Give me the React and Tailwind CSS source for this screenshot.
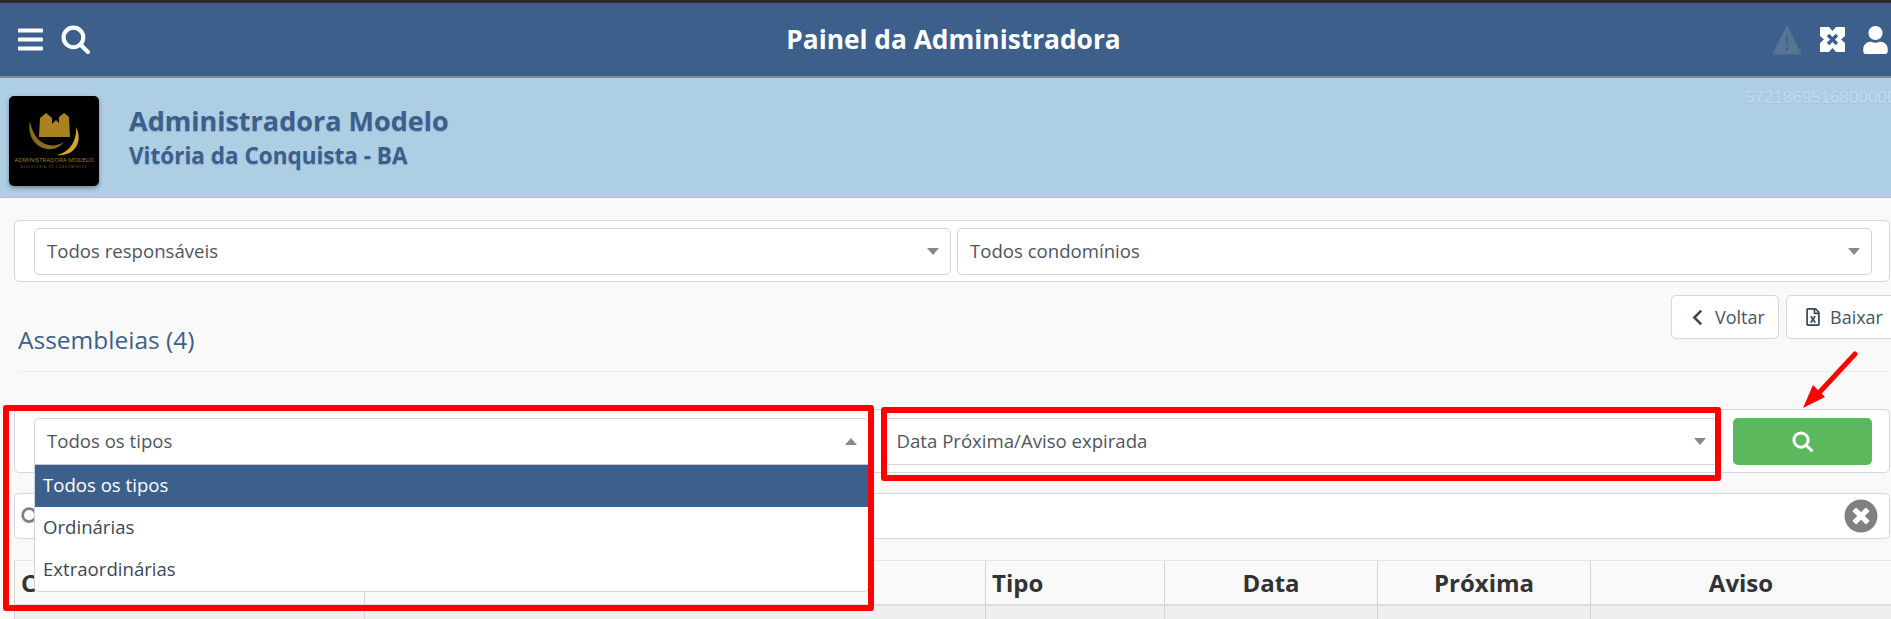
import { FaBars, FaUser, FaTimesCircle, FaRegFileExcel } from 'react-icons/fa';

const SearchGlyph = ({ className }) => (
	<svg viewBox="0 0 28 28" className={className} fill="none" stroke="currentColor" strokeWidth="4" strokeLinecap="round">
		<circle cx="12" cy="12" r="9.5" />
		<path d="M19 19l7 7" />
	</svg>
);

const Caret = ({ up }) => (
	<div className={`w-0 h-0 border-l-[6px] border-r-[6px] border-l-transparent border-r-transparent ${up ? 'border-b-[7px] border-b-[#888888]' : 'border-t-[7px] border-t-[#888888]'}`} />
);

const Select = ({ label, up, className }) => (
	<div className={`h-[47px] bg-white border border-[#ced4de] rounded-[5px] flex items-center justify-between pl-[12px] pr-[11px] text-[18.6px] text-[#4f5560] ${className}`}>
		<span>{label}</span>
		<Caret up={up} />
	</div>
);

const Logo = () => (
	<div className="w-[90px] h-[90px] bg-black rounded-[5px] shadow-[0_2px_4px_rgba(0,0,0,0.35)] shrink-0">
		<svg viewBox="0 0 90 90" className="w-full h-full">
			<path d="M30 41L31 22l6-5 6 5v6l4-4 3 3V21l5-4 5 4 1 20z" fill="#a98222" />
			<path d="M21 25c-3 13 4 26 17 28 8 1 13-2 17-7-5 3-10 4-15 3-11-2-17-12-19-24z" fill="#8a6a1c" />
			<path d="M67 31c1 12-5 25-19 28 16 2 27-12 19-28z" fill="#d2a52c" />
			<text x="45" y="66" textAnchor="middle" fontSize="6" fill="#a98222" fontFamily="Open Sans, sans-serif">ADMINISTRADORA MODELO</text>
			<text x="45" y="72" textAnchor="middle" fontSize="3" fill="#8a6a1c" letterSpacing="0.9" fontFamily="Open Sans, sans-serif">ASSESSORIA DE CONDOMÍNIOS</text>
		</svg>
	</div>
);

const cols = [
	{ name: 'Condomínio', w: 'w-[350px]', cls: 'pl-[6px]', rowCls: 'pl-[58px]', row: 'Residencial das Flores' },
	{ name: 'Assembleia', w: 'w-[621px]', cls: 'pl-[8px]', rowCls: 'pl-[160px]', row: 'Assembleia Ordinária' },
	{ name: 'Tipo', w: 'w-[179px]', cls: 'pl-[6px]', rowCls: 'pl-[40px]', row: 'Ordinária' },
	{ name: 'Data', w: 'w-[213px]', cls: 'text-center', rowCls: '', row: '' },
	{ name: 'Próxima', w: 'w-[213px]', cls: 'text-center', rowCls: '', row: '' },
	{ name: 'Aviso', w: 'flex-1', cls: 'text-center', rowCls: 'text-center', row: 'Aguardando confirmação' },
];

export default function App() {
	return (
		<div className="relative h-[619px] overflow-hidden bg-[#f9f9f9] font-['Open_Sans',sans-serif]">
			{/* navbar */}
			<div className="h-[76px] border-t-[3px] border-[#2b2b2b] bg-[#3c5f8b] shadow-[0_2px_0_#7d8a99] relative z-10 flex items-center justify-between pl-[18px] pr-[3px] text-white">
				<div className="flex items-center gap-[18px]">
					<FaBars className="w-[25px] h-[29px]" />
					<SearchGlyph className="w-[29px] h-[29px]" />
				</div>
				<h1 className="text-[26.3px] font-bold pl-[45px]">Painel da Administradora</h1>
				<div className="flex items-center gap-[18px]">
					<svg viewBox="0 0 30 30" className="w-[30px] h-[30px]">
						<path d="M15 1L29 29H1z" fill="#567494" stroke="#567494" strokeLinejoin="round" />
						<path d="M14 11h2l-.4 9h-1.2zM13.600 22.500h2.800v2.800h-2.800z" fill="#3c5f8b" />
					</svg>
					<svg viewBox="0 0 25 25" className="w-[25px] h-[25px]">
						<rect width="25" height="25" rx="1" fill="#fff" />
						<path d="M9 0h7l-3.500 4zM9 25h7l-3.500-4zM0 9v7l4-3.500zM25 9v7l-4-3.500z" fill="#3c5f8b" />
						<path d="M8 8l9 9M17 8l-9 9" stroke="#3c5f8b" strokeWidth="3.500" />
					</svg>
					<FaUser className="w-[25px] h-[28px]" />
				</div>
			</div>

			{/* banner */}
			<div className="relative h-[122px] bg-[#aecee4] border-b border-[#9cc6e6] flex items-start pl-[9px] pt-[20px]">
				<Logo />
				<div className="ml-[30px] pt-[7px] text-[#3c5f8b] font-bold [text-shadow:0_1px_1px_rgba(60,95,139,0.3)]">
					<div className="text-[27px] leading-[36px]">Administradora Modelo</div>
					<div className="text-[22.5px] leading-[33px]">Vitória da Conquista - BA</div>
				</div>
				<span className="absolute left-[1745px] top-[12px] font-['Liberation_Sans',sans-serif] text-[17px] leading-[20px] text-[#c2dbec] [text-shadow:0_1px_1px_#9dc2dc] whitespace-nowrap">5721869516800000</span>
			</div>

			{/* filtros */}
			<div className="ml-[14px] mr-px mt-[22px] h-[62px] bg-white border border-[#d3d8e0] rounded-[5px] flex items-center gap-[6px] pl-[19px] pr-[17px]">
				<Select label="Todos responsáveis" className="w-[917px]" />
				<Select label="Todos condomínios" className="flex-1" />
			</div>

			<div className="ml-[18px] mr-[3px] h-[90px] border-b border-[#eeeeee] flex items-start justify-between">
				<h2 className="pt-[40px] text-[24.5px] leading-[36px] text-[#3c5f8b]">Assembleias (4)</h2>
				<div className="flex gap-[7px] mt-[13px] -mr-[12px] text-[18px] text-[#4a5462]">
					<button className="w-[108px] h-[44px] bg-white border border-[#d3d8e0] rounded-[5px] flex items-center pl-[20px] gap-[12px]">
						<svg viewBox="0 0 10 16" className="w-[11px] h-[17px] text-[#39465a]" fill="none" stroke="currentColor" strokeWidth="2.400">
							<path d="M8.500 1.500L2 8l6.500 6.500" />
						</svg>
						Voltar
					</button>
					<button className="w-[114px] h-[44px] bg-white border border-[#d3d8e0] rounded-[5px] flex items-center pl-[19px] gap-[10px]">
						<FaRegFileExcel className="w-[14px] h-[18px] text-[#39465a]" />
						Baixar
					</button>
				</div>
			</div>

			{/* tipo + situacao */}
			<div className="ml-[14px] mr-px mt-[37px] h-[64px] bg-white border border-[#d3d8e0] rounded-[5px] flex items-center gap-[15px] pl-[19px] pr-[17px]">
				<div className="relative w-[835px]">
					<Select label="Todos os tipos" up className="w-full rounded-b-none" />
					<div className="absolute z-20 left-0 right-0 top-[46px] bg-white border border-[#ced4de] border-t-[#c4c9d1] rounded-b-[5px] text-[18.6px] text-[#3d4654]">
						<div className="h-[42px] flex items-center pl-[8px] pb-[2px] bg-[#3c5f8b] text-white">Todos os tipos</div>
						<div className="h-[42px] flex items-center pl-[8px] pb-[2px]">Ordinárias</div>
						<div className="h-[42px] flex items-center pl-[8px] pb-[2px]">Extraordinárias</div>
					</div>
				</div>
				<Select label="Data Próxima/Aviso expirada" className="w-[835px]" />
				<button className="w-[139px] h-[47px] bg-[#5cb85c] rounded-[5px] flex items-center justify-center text-white">
					<SearchGlyph className="w-[21px] h-[21px]" />
				</button>
			</div>

			{/* busca */}
			<div className="ml-[14px] mr-px mt-[20px] h-[46px] bg-white border border-[#d3d8e0] rounded-[5px] flex items-center justify-between pl-[6px] pr-[11px]">
				<SearchGlyph className="w-[19px] h-[19px] text-[#808080]" />
				<FaTimesCircle className="w-[34px] h-[34px] text-[#808080]" />
			</div>

			{/* tabela */}
			<div className="ml-[14px] mt-[21px] border-t border-[#e8e8e8]">
				<div className="flex h-[45px] border-b-2 border-[#dddddd] bg-[#f9f9f9]">
					{cols.map((c) => (
						<div key={c.name} className={`${c.w} ${c.cls} border-l border-[#d4d4d4] text-[24px] leading-[43px] font-bold text-[#333333]`}>{c.name}</div>
					))}
				</div>
				<div className="flex h-[30px] bg-[#efefef]">
					{cols.map((c) => (
						<div key={c.name} className={`${c.w} ${c.rowCls} border-l border-[#d4d4d4] text-[18px] leading-[24px] pt-[8px] text-[#333333] whitespace-nowrap`}>{c.row}</div>
					))}
				</div>
			</div>

			{/* marcacoes */}
			<div className="absolute z-30 left-[3px] top-[405px] w-[871px] h-[206px] border-[6px] border-[#ff0000] rounded-[3px]" />
			<div className="absolute z-30 left-[881px] top-[407px] w-[840px] h-[74px] border-[6px] border-[#ff0000] rounded-[3px]" />
			<svg className="absolute z-30 left-[1795px] top-[345px] w-[70px] h-[70px]" viewBox="0 0 70 70">
				<path d="M60 9L22 50" stroke="#ff0000" strokeWidth="5" strokeLinecap="round" />
				<path d="M8 63L18 40l12 12z" fill="#ff0000" />
			</svg>
		</div>
	);
}
